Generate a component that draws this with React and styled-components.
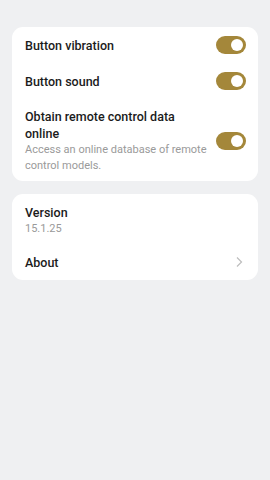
import React, { useState } from 'react'
import styled, { createGlobalStyle } from 'styled-components'

const Global = createGlobalStyle`
  html, body {
    margin: 0;
    padding: 0;
    background: #eff0f2;
    font-family: Roboto, 'Noto Sans', sans-serif;
  }
`

const Page = styled.div`
  min-height: 480px;
  padding: 27px 12px 0;
  box-sizing: border-box;
  display: flex;
  flex-direction: column;
  gap: 13px;
`

const Card = styled.div`
  background: #fff;
  border-radius: 11px;
  display: flex;
  flex-direction: column;
`

const Row = styled.div`
  display: flex;
  align-items: center;
  min-height: 36px;
  padding: ${p => p.tall ? '9px 12px 7px 13px' : '0 12px 0 13px'};
  box-sizing: border-box;
`

const Texts = styled.div`
  flex: 1;
  min-width: 0;
  padding-right: 6px;
`

const Title = styled.div`
  font-size: 12.5px;
  font-weight: 500;
  line-height: 17px;
  color: #1b1b1b;
  padding-right: 8px;
`

const Sub = styled.div`
  font-size: 11px;
  line-height: 16px;
  color: #9a9a9a;
`

const Track = styled.button`
  flex: none;
  width: 30px;
  height: 18px;
  border: none;
  padding: 0;
  border-radius: 9px;
  background: ${p => p.on ? '#a4873a' : '#cfcfcf'};
  position: relative;
  cursor: pointer;
  &::after {
    content: '';
    position: absolute;
    top: 3px;
    left: ${p => p.on ? '15px' : '3px'};
    width: 12px;
    height: 12px;
    border-radius: 50%;
    background: #fff;
  }
`

const Chevron = () => (
  <svg width="8" height="12" viewBox="0 0 8 12" style={{ flex: 'none', marginRight: 3 }}>
    <path d="M2 1.5 L6.5 6 L2 10.5" fill="none" stroke="#bdbdbd" strokeWidth="1.2" />
  </svg>
)

const Toggle = ({ initial }) => {
  const [on, setOn] = useState(initial)
  return <Track on={on} onClick={() => setOn(!on)} />
}

const App = () => (
  <>
    <Global />
    <Page>
      <Card>
        <Row>
          <Texts><Title>Button vibration</Title></Texts>
          <Toggle initial={true} />
        </Row>
        <Row>
          <Texts><Title>Button sound</Title></Texts>
          <Toggle initial={true} />
        </Row>
        <Row tall>
          <Texts>
            <Title>Obtain remote control data online</Title>
            <Sub>Access an online database of remote control models.</Sub>
          </Texts>
          <Toggle initial={true} />
        </Row>
      </Card>
      <Card>
        <Row tall style={{ paddingTop: 10 }}>
          <Texts>
            <Title>Version</Title>
            <Sub>15.1.25</Sub>
          </Texts>
        </Row>
        <Row>
          <Texts><Title>About</Title></Texts>
          <Chevron />
        </Row>
      </Card>
    </Page>
  </>
)

export default App
